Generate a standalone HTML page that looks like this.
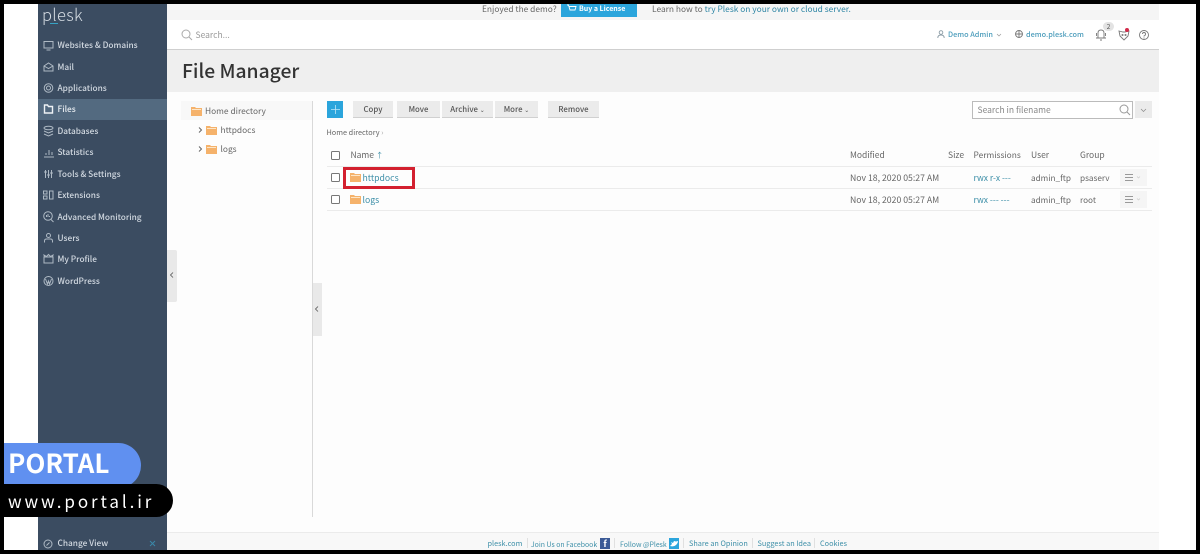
<!DOCTYPE html>
<html><head><meta charset="utf-8"><title>File Manager</title>
<style>
html,body{margin:0;padding:0;background:#000;width:1200px;height:554px;overflow:hidden}
body{font-family:"Noto Sans CJK JP","Liberation Sans",sans-serif;position:relative}
div,span,svg{position:absolute}
span.i{position:static}
#p{left:4px;top:4px;width:1192px;height:546px;background:#fff;overflow:hidden}
#w{left:-4px;top:-4px;width:1200px;height:554px;filter:blur(.3px)}
.t{white-space:nowrap;line-height:14px;font-size:8.500px;color:#555}
.n{left:57.500px;color:#d3dae2;font-size:8.300px;font-weight:500}
.b{top:101px;height:16px;background:#ebebeb;border-bottom:1px solid #d0d0d0;color:#555;font-size:7.800px;font-weight:500;text-align:center;line-height:18px;white-space:nowrap}
.l{left:327px;width:825px;height:1px;background:#ebebeb}
.c{left:331px;width:7px;height:7px;border:1px solid #777;border-radius:1.500px;background:#fff}
.a{color:#3d8fa8}
.g{color:#666}
.ft{font-size:7.300px;top:537px;color:#3d8fa8}
svg{overflow:visible;fill:none}
.ic{stroke:#aeb9c4;stroke-width:1}
</style></head><body>
<div id="p"><div id="w">
<!-- main backgrounds -->
<div style="left:167px;top:4px;width:992px;height:16px;background:#f5f5f5"></div>
<div style="left:167px;top:20px;width:992px;height:29px;background:#fff"></div>
<div style="left:167px;top:49px;width:992px;height:1px;background:#cfcfcf"></div>
<div style="left:167px;top:50px;width:992px;height:42px;background:#efefef"></div>
<div style="left:167px;top:92px;width:992px;height:440px;background:#fdfdfd"></div>
<div style="left:167px;top:532px;width:992px;height:18px;background:#f8f8f8;border-top:1px solid #ebebeb;box-sizing:border-box"></div>

<!-- sidebar -->
<div style="left:38px;top:4px;width:129px;height:546px;background:#3b4c61"></div>
<div style="left:38px;top:99px;width:129px;height:21px;background:#536a80"></div>
<div class="t" style="left:42px;top:3px;font-size:16.500px;line-height:22px;color:#d5dce3;font-weight:300;letter-spacing:.02em">plesk</div>
<div style="left:50px;top:23px;width:8px;height:1px;background:#37a3c4"></div>

<div class="t n" style="top:38px">Websites &amp; Domains</div>
<div class="t n" style="top:60px">Mail</div>
<div class="t n" style="top:81px">Applications</div>
<div class="t n" style="top:102px;color:#e8edf1">Files</div>
<div class="t n" style="top:124px">Databases</div>
<div class="t n" style="top:145px">Statistics</div>
<div class="t n" style="top:167px">Tools &amp; Settings</div>
<div class="t n" style="top:188px">Extensions</div>
<div class="t n" style="top:210px">Advanced Monitoring</div>
<div class="t n" style="top:231px">Users</div>
<div class="t n" style="top:252px">My Profile</div>
<div class="t n" style="top:274px">WordPress</div>
<div class="t n" style="top:536px">Change View</div>

<svg width="1200" height="554" style="left:0;top:0" class="ic">
<path d="M44 41.500h9v6.500h-9zM46.500 50h4"/>
<path d="M44 66l4.500-3 4.500 3v5h-9zM44 66l4.500 2.500L53 66"/>
<circle cx="48.500" cy="88" r="2"/><circle cx="48.500" cy="88" r="4.300"/>
<path d="M44.500 105h3l1 1.500h4v6.500h-8z" stroke="#eef2f5" stroke-width="1.400"/>
<ellipse cx="48.500" cy="128" rx="4.500" ry="1.800"/><path d="M44 131l4.500 2 4.500-2M44 134l4.500 2 4.500-2"/>
<path d="M44 157h10M46 155v-2M49 155v-5M52 155v-3"/>
<path d="M45.500 170v8M48.500 170v8M51.500 170v8M44 172h3M47 175h3M50 173h3"/>
<path d="M43.500 191h3.500v3h-3.500zM43.500 196h3.500v3h-3.500zM49.500 191h3.500v8h-3.500z" />
<circle cx="48" cy="216" r="4.300"/><path d="M51 219.500l2.500 2.500M46.500 217v-2M48 217v-3M49.500 217v-1"/>
<circle cx="48.500" cy="235.500" r="2"/><path d="M44.500 242.500v-1.500q0-2 2-2h4q2 0 2 2v1.500"/>
<path d="M44 257h9v6h-9zM44.500 257l-.5-2 2.500 1.500 2-2 2 2 2.500-1.500-.5 2"/>
<circle cx="48.500" cy="281" r="4.500"/><path d="M45.500 279l2 5 1-3 1 3 2-5"/>
<circle cx="48" cy="544" r="4" /><path d="M46.500 545.500l3-3"/>
<path d="M150 541l5 5M155 541l-5 5" stroke="#3a87a8"/>
</svg>

<!-- top banner -->
<div class="t g" style="left:482px;top:1.500px;font-size:8.400px">Enjoyed the demo?</div>
<div style="left:561px;top:0;width:76px;height:17px;background:#2ba5dc"></div>
<div class="t" style="left:579px;top:1.500px;font-size:7px;font-weight:700;color:#fff">Buy a License</div>
<svg width="10" height="10" style="left:567px;top:4px" stroke="#fff" stroke-width=".9"><path d="M0 1h1.500l1.500 5h5l1-3.500H2"/></svg>
<div class="t g" style="left:652px;top:1.500px;font-size:8.400px">Learn how to <span class="i a" style="color:#2f86a5">try Plesk on your own or cloud server.</span></div>

<!-- search bar -->
<svg width="12" height="12" style="left:181px;top:29px" stroke="#aaa"><circle cx="5" cy="5" r="4"/><path d="M8 8l3 3"/></svg>
<div class="t" style="left:195.500px;top:27.500px;color:#999;font-size:8.500px">Search...</div>
<svg width="9" height="9" style="left:937px;top:30px" stroke="#8a9ba5" stroke-width=".9"><circle cx="4" cy="2.500" r="1.800"/><path d="M.8 8q0-3 3.200-3t3.200 3"/></svg>
<div class="t a" style="left:948px;top:27.500px;font-size:7.300px;color:#4b9cbb;font-weight:500">Demo Admin</div>
<svg width="5" height="3" style="left:997px;top:34px" stroke="#999" stroke-width=".7"><path d="M0 0l2 2 2-2"/></svg>
<svg width="9" height="9" style="left:1015px;top:30px" stroke="#777" stroke-width=".9"><circle cx="4" cy="4" r="3.500"/><path d="M.5 4h7M4 .5v7"/></svg>
<div class="t a" style="left:1026px;top:27.500px;font-size:7.300px;color:#4b9cbb;font-weight:500">demo.plesk.com</div>
<div style="left:1103px;top:22px;width:11px;height:9px;border-radius:5px;background:#e3e3e3;color:#555;font-size:6.500px;line-height:9px;text-align:center">2</div>
<svg width="12" height="12" style="left:1095px;top:29px" stroke="#777" stroke-width=".9"><path d="M3 9V4q0-3 3-3t3 3v5zM1 9h10M1.500 4v3M10.500 4v3M5 11h2"/></svg>
<svg width="12" height="12" style="left:1118px;top:29px" stroke="#777" stroke-width=".9"><path d="M1 2l4 1h2l4-1-1 5-4 4-4-4z"/><circle cx="4.500" cy="6" r=".6"/><circle cx="7.500" cy="6" r=".6"/></svg>
<div style="left:1125px;top:28px;width:4px;height:4px;border-radius:2px;background:#d22b4a"></div>
<svg width="11" height="11" style="left:1139px;top:30px" stroke="#777" stroke-width=".9"><circle cx="5" cy="5" r="4.500"/><path d="M3.500 4q0-1.500 1.500-1.500T6.500 4 5 6v.5M5 7.500v1"/></svg>

<!-- title -->
<div class="t" style="left:182px;top:57px;font-size:19.300px;line-height:26px;color:#333;font-weight:500">File Manager</div>

<!-- tree -->
<div style="left:181px;top:101px;width:131px;height:19px;background:#f8f8f8"></div>
<div style="left:312px;top:101px;width:1px;height:416px;background:#d9d9d9"></div>
<svg width="12" height="10" style="left:190.500px;top:106px"><path d="M0 1h4l1 1h6v8H0z" fill="#f5b26b"/><path d="M1 3h9v1H1z" fill="#fde6c8"/></svg>
<div class="t g" style="left:205px;top:104px;font-size:8.400px">Home directory</div>
<svg width="5" height="7" style="left:198px;top:127px" stroke="#666"><path d="M1 .5l2.500 2.500L1 5.500"/></svg>
<svg width="12" height="10" style="left:206px;top:125px"><path d="M0 1h4l1 1h6v8H0z" fill="#f5b26b"/><path d="M1 3h9v1H1z" fill="#fde6c8"/></svg>
<div class="t g" style="left:220.500px;top:123px;font-size:8.400px">httpdocs</div>
<svg width="5" height="7" style="left:198px;top:146px" stroke="#666"><path d="M1 .5l2.500 2.500L1 5.500"/></svg>
<svg width="12" height="10" style="left:206px;top:144px"><path d="M0 1h4l1 1h6v8H0z" fill="#f5b26b"/><path d="M1 3h9v1H1z" fill="#fde6c8"/></svg>
<div class="t g" style="left:220.500px;top:142px;font-size:8.400px">logs</div>

<!-- collapse handles -->
<div style="left:167px;top:250px;width:10px;height:52px;background:#e9e9e9;border-radius:0 2px 2px 0"></div>
<svg width="5" height="7" style="left:169.500px;top:272px" stroke="#555" stroke-width=".8"><path d="M3 .5l-2.500 2.500L3 5.500"/></svg>
<div style="left:313px;top:283px;width:9px;height:53px;background:#e9e9e9"></div>
<svg width="5" height="7" style="left:315px;top:306px" stroke="#555" stroke-width=".8"><path d="M3 .5l-2.500 2.500L3 5.500"/></svg>

<!-- toolbar -->
<div style="left:327px;top:101px;width:16px;height:17px;background:#2ba5dc"></div>
<svg width="9" height="9" style="left:331px;top:105px" stroke="#bfe6f7" stroke-width=".8"><path d="M4.500 0v9M0 4.500h9"/></svg>
<div class="b" style="left:353px;width:40px">Copy</div>
<div class="b" style="left:397px;width:43px">Move</div>
<div class="b" style="left:442px;width:51px">Archive <span class="i" style="font-size:6px">⌄</span></div>
<div class="b" style="left:495px;width:43px">More <span class="i" style="font-size:6px">⌄</span></div>
<div class="b" style="left:548px;width:51px">Remove</div>

<div style="left:972px;top:101px;width:159px;height:16px;background:#fff;border:1px solid #bbb"></div>
<div class="t" style="left:977.500px;top:103px;color:#888">Search in filename</div>
<svg width="12" height="12" style="left:1119px;top:104px" stroke="#999"><circle cx="5" cy="5" r="4"/><path d="M8 8l3 3"/></svg>
<div style="left:1135px;top:101px;width:17px;height:17px;background:#ebebeb"></div>
<svg width="5" height="3" style="left:1141px;top:109px" stroke="#888" stroke-width=".7"><path d="M0 0l2.500 2.500L5 0"/></svg>

<div class="t" style="left:326.500px;top:125.500px;font-size:7.300px;color:#666">Home directory <span class="i" style="color:#aaa">›</span></div>

<!-- table -->
<div class="l" style="top:166px"></div>
<div class="l" style="top:188px"></div>
<div class="l" style="top:210px"></div>
<div class="c" style="top:151px"></div>
<div class="c" style="top:173px"></div>
<div class="c" style="top:195px"></div>

<div class="t g" style="left:350.500px;top:148px">Name <span class="i a" style="font-size:7.500px">↑</span></div>
<div class="t g" style="left:850px;top:148px">Modified</div>
<div class="t g" style="left:948px;top:148px">Size</div>
<div class="t g" style="left:973.500px;top:148px;font-size:8.400px">Permissions</div>
<div class="t g" style="left:1031px;top:148px">User</div>
<div class="t g" style="left:1080px;top:148px">Group</div>

<svg width="12" height="10" style="left:350px;top:172px"><path d="M0 1h4l1 1h6v8H0z" fill="#f5b26b"/><path d="M1 3h9v1H1z" fill="#fde6c8"/></svg>
<div class="t a" style="left:362.500px;top:171px;font-size:8.700px">httpdocs</div>
<svg width="12" height="10" style="left:350px;top:194px"><path d="M0 1h4l1 1h6v8H0z" fill="#f5b26b"/><path d="M1 3h9v1H1z" fill="#fde6c8"/></svg>
<div class="t a" style="left:362.500px;top:193px;font-size:8.700px">logs</div>

<div class="t g" style="left:850px;top:171px;font-size:8.700px">Nov 18, 2020 05:27 AM</div>
<div class="t g" style="left:850px;top:193px;font-size:8.700px">Nov 18, 2020 05:27 AM</div>
<div class="t a" style="left:973.500px;top:171px">rwx r-x ---</div>
<div class="t a" style="left:973.500px;top:193px">rwx --- ---</div>
<div class="t g" style="left:1031px;top:171px;font-size:8.200px">admin_ftp</div>
<div class="t g" style="left:1031px;top:193px;font-size:8.200px">admin_ftp</div>
<div class="t g" style="left:1080px;top:171px;font-size:8.200px">psaserv</div>
<div class="t g" style="left:1080px;top:193px;font-size:8.200px">root</div>

<div style="left:1120px;top:169px;width:27px;height:17px;background:#f5f5f5"></div>
<div style="left:1120px;top:191px;width:27px;height:17px;background:#f5f5f5"></div>
<svg width="20" height="50" style="left:1125px;top:174px" stroke="#999"><path d="M0 .5h8M0 3.500h8M0 6.500h8M0 22.500h8M0 25.500h8M0 28.500h8"/><path d="M12 2.500l1.500 1.500L15 2.500M12 24.500l1.500 1.500 1.500-1.500" stroke="#ccc" stroke-width=".7"/></svg>

<!-- red highlight -->
<div style="left:343px;top:167px;width:66px;height:16px;border:3px solid #d3202f"></div>

<!-- footer -->
<div class="t ft" style="left:487.500px">plesk.com</div>
<div style="left:527px;top:538px;width:1px;height:10px;background:#e0e0e0"></div>
<div class="t ft" style="left:531px;font-size:6.900px">Join Us on Facebook</div>
<div style="left:600px;top:538px;width:10px;height:11px;background:#3b5a96;color:#fff;font-size:9px;font-weight:700;line-height:12px;text-align:center">f</div>
<div style="left:614px;top:538px;width:1px;height:10px;background:#e0e0e0"></div>
<div class="t ft" style="left:620px;font-size:6.900px">Follow @Plesk</div>
<div style="left:669px;top:538px;width:10px;height:11px;background:#2ba5dc"></div>
<svg width="8" height="6" style="left:670px;top:540.500px"><path d="M0 5q4 1 6-1t2-4l-2 .5L4 0 3 2 1 1l1 2z" fill="#fff"/></svg>
<div style="left:683px;top:538px;width:1px;height:10px;background:#e0e0e0"></div>
<div class="t ft" style="left:689px">Share an Opinion</div>
<div style="left:752px;top:538px;width:1px;height:10px;background:#e0e0e0"></div>
<div class="t ft" style="left:757.500px">Suggest an Idea</div>
<div style="left:814px;top:538px;width:1px;height:10px;background:#e0e0e0"></div>
<div class="t ft" style="left:820px">Cookies</div>
</div></div>

<!-- watermark -->
<div style="left:4px;top:443px;width:137px;height:45px;background:#6090f0;border-radius:0 24px 24px 0"></div>
<div class="t" style="left:8px;top:446px;font-size:26px;line-height:34px;font-weight:700;color:#fff">PORTAL</div>
<div style="left:0;top:484px;width:173px;height:33px;background:#000;border-radius:0 17px 17px 0"></div>
<div class="t" style="left:8px;top:491px;font-size:17px;line-height:20px;color:#fff;letter-spacing:.17em">www.portal.ir</div>
</body></html>
